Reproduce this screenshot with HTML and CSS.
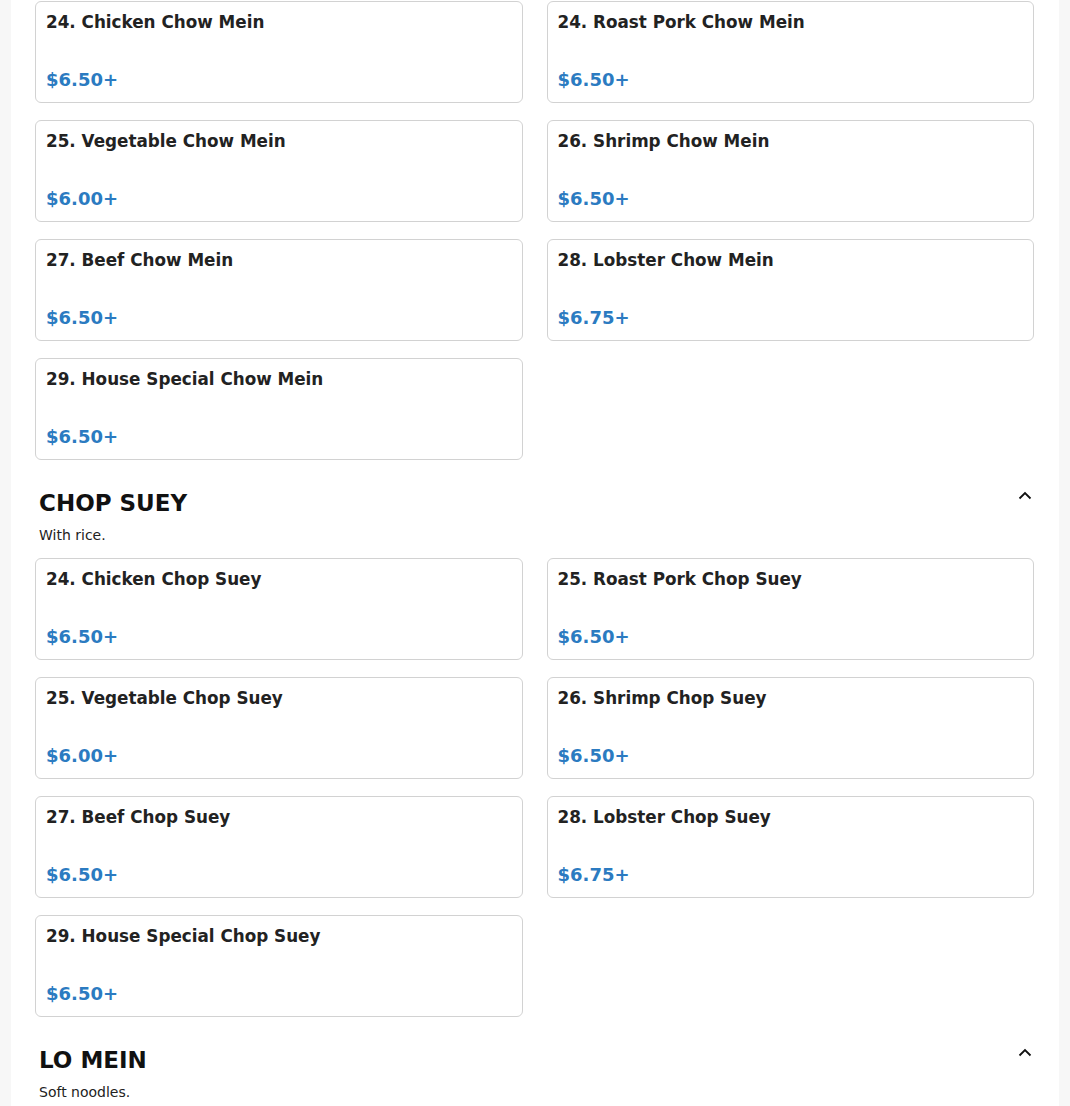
FILE: index.html
```html
<!DOCTYPE html>
<html lang="en">
<head>
<meta charset="utf-8">
<title>Menu</title>
<link rel="stylesheet" href="styles.css">
</head>
<body>
<main class="menu">
  <section class="section section-cont">
    <div class="grid">
      <div class="card"><div class="name">24. Chicken Chow Mein</div><div class="price">$6.50+</div></div>
      <div class="card"><div class="name">24. Roast Pork Chow Mein</div><div class="price">$6.50+</div></div>
      <div class="card"><div class="name">25. Vegetable Chow Mein</div><div class="price">$6.00+</div></div>
      <div class="card"><div class="name">26. Shrimp Chow Mein</div><div class="price">$6.50+</div></div>
      <div class="card"><div class="name">27. Beef Chow Mein</div><div class="price">$6.50+</div></div>
      <div class="card"><div class="name">28. Lobster Chow Mein</div><div class="price">$6.75+</div></div>
      <div class="card"><div class="name">29. House Special Chow Mein</div><div class="price">$6.50+</div></div>
    </div>
  </section>

  <section class="section">
    <div class="section-head">
      <div>
        <h2 class="title">CHOP SUEY</h2>
        <p class="desc">With rice.</p>
      </div>
      <svg class="chev" width="14" height="10" viewBox="0 0 14 10" aria-hidden="true"><path d="M1.5 7.5 L7 2 L12.5 7.5" fill="none" stroke="#111" stroke-width="1.8"/></svg>
    </div>
    <div class="grid">
      <div class="card"><div class="name">24. Chicken Chop Suey</div><div class="price">$6.50+</div></div>
      <div class="card"><div class="name">25. Roast Pork Chop Suey</div><div class="price">$6.50+</div></div>
      <div class="card"><div class="name">25. Vegetable Chop Suey</div><div class="price">$6.00+</div></div>
      <div class="card"><div class="name">26. Shrimp Chop Suey</div><div class="price">$6.50+</div></div>
      <div class="card"><div class="name">27. Beef Chop Suey</div><div class="price">$6.50+</div></div>
      <div class="card"><div class="name">28. Lobster Chop Suey</div><div class="price">$6.75+</div></div>
      <div class="card"><div class="name">29. House Special Chop Suey</div><div class="price">$6.50+</div></div>
    </div>
  </section>

  <section class="section">
    <div class="section-head">
      <div>
        <h2 class="title">LO MEIN</h2>
        <p class="desc">Soft noodles.</p>
      </div>
      <svg class="chev" width="14" height="10" viewBox="0 0 14 10" aria-hidden="true"><path d="M1.5 7.5 L7 2 L12.5 7.5" fill="none" stroke="#111" stroke-width="1.8"/></svg>
    </div>
    <div class="grid">
      <div class="card"><div class="name">30. Chicken Lo Mein</div><div class="price">$6.50+</div></div>
      <div class="card"><div class="name">31. Roast Pork Lo Mein</div><div class="price">$6.50+</div></div>
    </div>
  </section>
</main>
</body>
</html>
```
FILE: styles.css
```css
* { box-sizing: border-box; }
html, body { margin: 0; padding: 0; }
body {
  background: #f7f7f7;
  font-family: "DejaVu Sans", "Liberation Sans", sans-serif;
  color: #222;
}
.menu {
  max-width: 1048px;
  margin: 0 auto;
  background: #fff;
  padding: 1px 25px 40px 24px;
}
.grid {
  display: grid;
  grid-template-columns: 1fr 1fr;
  column-gap: 24px;
  row-gap: 17px;
}
.card {
  height: 102px;
  border: 1px solid #d2d2d2;
  border-radius: 6px;
  padding: 8px 10px 10px;
  display: flex;
  flex-direction: column;
  background: #fff;
}
.name {
  font-size: 16.8px;
  font-weight: bold;
  line-height: 24px;
  color: #222;
}
.price {
  margin-top: auto;
  font-size: 18px;
  font-weight: bold;
  line-height: 24px;
  color: #2b7bc1;
}
.section-head {
  display: flex;
  justify-content: space-between;
  align-items: flex-start;
  padding: 29px 2px 0 4px;
  margin-bottom: 13px;
}
.title {
  margin: 0;
  font-size: 23px;
  line-height: 28px;
  font-weight: bold;
  color: #111;
}
.desc {
  margin: 8px 0 0;
  font-size: 14px;
  line-height: 20px;
  color: #222;
}
.chev {
  margin-top: 2px;
  display: block;
}
```
